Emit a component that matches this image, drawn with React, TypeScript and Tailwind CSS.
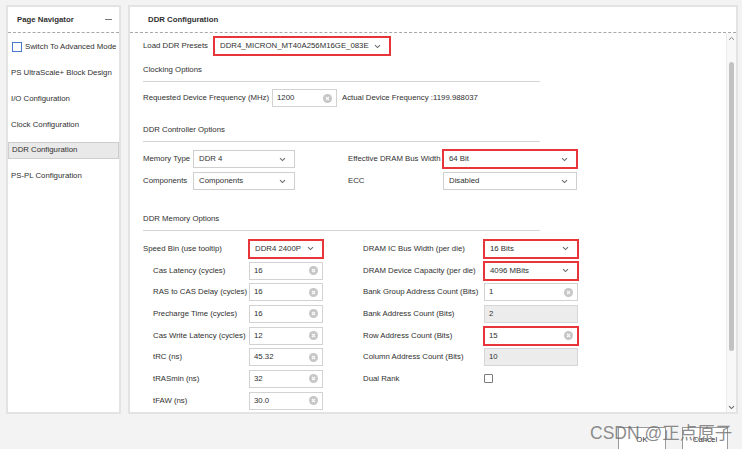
import clsx from 'clsx'

const navItems = [
  'PS UltraScale+ Block Design',
  'I/O Configuration',
  'Clock Configuration',
  'DDR Configuration',
  'PS-PL Configuration'
]

type Field = {
  label: string
  kind: 'select' | 'input' | 'disabled' | 'check' | 'text'
  value?: string
  red?: boolean
  indent?: boolean
}

const leftFields: Field[] = [
  { label: 'Speed Bin (use tooltip)', kind: 'select', value: 'DDR4 2400P', red: true },
  { label: 'Cas Latency (cycles)', kind: 'input', value: '16', indent: true },
  { label: 'RAS to CAS Delay (cycles)', kind: 'input', value: '16', indent: true },
  { label: 'Precharge Time (cycles)', kind: 'input', value: '16', indent: true },
  { label: 'Cas Write Latency (cycles)', kind: 'input', value: '12', indent: true },
  { label: 'tRC (ns)', kind: 'input', value: '45.32', indent: true },
  { label: 'tRASmin (ns)', kind: 'input', value: '32', indent: true },
  { label: 'tFAW (ns)', kind: 'input', value: '30.0', indent: true },
  { label: 'tRFC (ns)', kind: 'input', value: '350', indent: true }
]

const rightFields: Field[] = [
  { label: 'DRAM IC Bus Width (per die)', kind: 'select', value: '16 Bits', red: true },
  { label: 'DRAM Device Capacity (per die)', kind: 'select', value: '4096 MBits', red: true },
  { label: 'Bank Group Address Count (Bits)', kind: 'input', value: '1' },
  { label: 'Bank Address Count (Bits)', kind: 'disabled', value: '2' },
  { label: 'Row Address Count (Bits)', kind: 'input', value: '15', red: true },
  { label: 'Column Address Count (Bits)', kind: 'disabled', value: '10' },
  { label: 'Dual Rank', kind: 'check' }
]

function Chevron() {
  return (
    <svg width="7" height="5" viewBox="0 0 7 5" className="shrink-0">
      <path d="M1 1.2l2.5 2.4L6 1.2" fill="none" stroke="#6b6b6b" strokeWidth="1.1" />
    </svg>
  )
}

function ClearIcon() {
  return (
    <svg width="9" height="9" viewBox="0 0 9 9" className="shrink-0">
      <circle cx="4.5" cy="4.5" r="4.5" fill="#c6c6c6" />
      <path d="M2.9 2.9l3.2 3.2M6.1 2.9L2.9 6.1" stroke="#fff" strokeWidth="1.1" />
    </svg>
  )
}

function Select({ value, className, red }: { value: string; className: string; red?: boolean }) {
  return (
    <div
      className={clsx(
        'flex h-[18px] items-center justify-between border bg-white pr-[8px] pl-[5px]',
        red ? 'border-[#e8353a] outline outline-1 outline-[#e8353a]' : 'border-[#cfcfcf]',
        className
      )}
    >
      <span>{value}</span>
      <Chevron />
    </div>
  )
}

function Input({
  value,
  className,
  red,
  disabled
}: {
  value: string
  className: string
  red?: boolean
  disabled?: boolean
}) {
  return (
    <div
      className={clsx(
        'flex h-[18px] items-center justify-between border pr-[4px] pl-[4px]',
        disabled ? 'border-[#d6d6d6] bg-[#ececec]' : 'bg-white',
        red ? 'border-[#e8353a] outline outline-1 outline-[#e8353a]' : !disabled && 'border-[#d2d2d2]',
        className
      )}
    >
      <span>{value}</span>
      {!disabled && <ClearIcon />}
    </div>
  )
}

function FieldRow({ f, labelW, boxW }: { f: Field; labelW: string; boxW: string }) {
  return (
    <div className="flex h-[21.7px] items-center">
      <div className={clsx('shrink-0 whitespace-nowrap', labelW, f.indent && 'pl-[10px]')}>{f.label}</div>
      {f.kind === 'select' && <Select value={f.value!} red={f.red} className={boxW} />}
      {f.kind === 'input' && <Input value={f.value!} red={f.red} className={boxW} />}
      {f.kind === 'disabled' && <Input value={f.value!} disabled className={boxW} />}
      {f.kind === 'check' && <div className="h-[9px] w-[9px] rounded-[1px] border border-[#7a7a7a] bg-white" />}
      {f.kind === 'text' && <div>{f.value}</div>}
    </div>
  )
}

function SectionTitle({ children, className }: { children: string; className: string }) {
  return (
    <>
      <div className={clsx('flex h-[12px] items-center', className)}>{children}</div>
      <div className="mt-[5px] h-px w-[397px] bg-[#d4d4d4]" />
    </>
  )
}

export default function App() {
  return (
    <div className="relative flex h-[449px] w-[742px] flex-col overflow-hidden bg-[#f3f3f3] font-['Liberation_Sans',Arial,sans-serif] text-[7.8px] text-[#303030]">
      <div className="flex h-[414px] gap-[7px] pt-[5px] pl-[6px]">
        {/* Page navigator */}
        <div className="flex w-[115px] flex-col border-2 border-[#e3e3e3] bg-white">
          <div className="flex h-[26px] shrink-0 items-center justify-between border-b border-dashed border-[#a8a8a8] pr-[7px] pl-[9px]">
            <span className="font-bold">Page Navigator</span>
            <span className="h-px w-[7px] bg-[#777]" />
          </div>
          <div className="mt-[1px] flex h-[26px] items-center gap-[3px] pl-[4px]">
            <div className="h-[10px] w-[10px] border-[1.5px] border-[#4a78c8] bg-white" />
            <span>Switch To Advanced Mode</span>
          </div>
          {navItems.map(item => (
            <div key={item} className="flex h-[25.8px] items-center">
              <div
                className={clsx(
                  'flex h-[17px] w-full items-center pl-[3px]',
                  item === 'DDR Configuration' && 'border border-[#cdcdcd] bg-[#e9e9e9]'
                )}
              >
                {item}
              </div>
            </div>
          ))}
        </div>

        {/* DDR configuration */}
        <div className="flex w-[610px] flex-col border-2 border-[#e3e3e3] bg-white">
          <div className="flex h-[26px] shrink-0 items-center border-b border-dashed border-[#a8a8a8] pl-[18px] font-bold">
            DDR Configuration
          </div>
          <div className="flex min-h-0 flex-1">
            <div className="min-w-0 flex-1 overflow-hidden pl-[13px]">
              <div className="mt-[4px] flex h-[18px] items-center">
                <div className="w-[71px] shrink-0">Load DDR Presets</div>
                <Select value="DDR4_MICRON_MT40A256M16GE_083E" red className="w-[176px]" />
              </div>

              <SectionTitle className="mt-[9px]">Clocking Options</SectionTitle>
              <div className="mt-[7px] flex h-[18px] items-center">
                <div className="w-[129px] shrink-0">Requested Device Frequency (MHz)</div>
                <Input value="1200" className="w-[65px]" />
                <div className="ml-[5px]">Actual Device Frequency :1199.988037</div>
              </div>

              <SectionTitle className="mt-[17px]">DDR Controller Options</SectionTitle>
              <div className="mt-[8px] flex h-[18px] items-center">
                <div className="w-[50px] shrink-0">Memory Type</div>
                <Select value="DDR 4" className="w-[102px]" />
                <div className="ml-[53px] w-[95px] shrink-0">Effective DRAM Bus Width</div>
                <Select value="64 Bit" red className="w-[134px]" />
              </div>
              <div className="mt-[4px] flex h-[18px] items-center">
                <div className="w-[50px] shrink-0">Components</div>
                <Select value="Components" className="w-[102px]" />
                <div className="ml-[53px] w-[95px] shrink-0">ECC</div>
                <Select value="Disabled" className="w-[134px]" />
              </div>

              <SectionTitle className="mt-[23px]">DDR Memory Options</SectionTitle>
              <div className="mt-[7px] flex">
                <div className="w-[220px] shrink-0">
                  {leftFields.map(f => (
                    <FieldRow key={f.label} f={f} labelW="w-[106px]" boxW="w-[74px]" />
                  ))}
                </div>
                <div className="flex-1">
                  {rightFields.map(f => (
                    <FieldRow key={f.label} f={f} labelW="w-[121px]" boxW="w-[94px]" />
                  ))}
                  <div className="h-[14.3px]" />
                  <FieldRow
                    f={{ label: 'DDR Size (in Hex)', kind: 'text', value: '0x7FFFFFFF (2GB)' }}
                    labelW="w-[121px]"
                    boxW=""
                  />
                </div>
              </div>
            </div>

            {/* scrollbar */}
            <div className="flex w-[10px] shrink-0 flex-col items-center border-l border-[#ececec] bg-[#f8f8f8] pb-[2px]">
              <svg width="7" height="5" viewBox="0 0 7 5" className="mt-[3px]">
                <path d="M1 3.8l2.5-2.4L6 3.8" fill="none" stroke="#8a8a8a" strokeWidth="1" />
              </svg>
              <div className="mt-[21px] h-[289px] w-[5px] rounded-full bg-[#c2c2c2]" />
              <div className="flex-1" />
              <Chevron />
            </div>
          </div>
        </div>
      </div>

      {/* dialog buttons */}
      <div className="flex flex-1 justify-end gap-[16px] pt-[13px] pr-[14px]">
        <div className="flex h-[26px] w-[48px] items-start justify-center border border-[#9a9a9a] bg-white pt-[6px]">
          OK
        </div>
        <div className="flex h-[26px] w-[46px] items-start justify-center border border-[#9a9a9a] bg-white pt-[6px]">
          Cancel
        </div>
      </div>

      <div className="absolute top-[420px] left-[590px] font-['Liberation_Sans','Noto_Sans_CJK_SC',sans-serif] text-[17.5px] text-[#6e6e6e]/80">
        CSDN @正点原子
      </div>
    </div>
  )
}
